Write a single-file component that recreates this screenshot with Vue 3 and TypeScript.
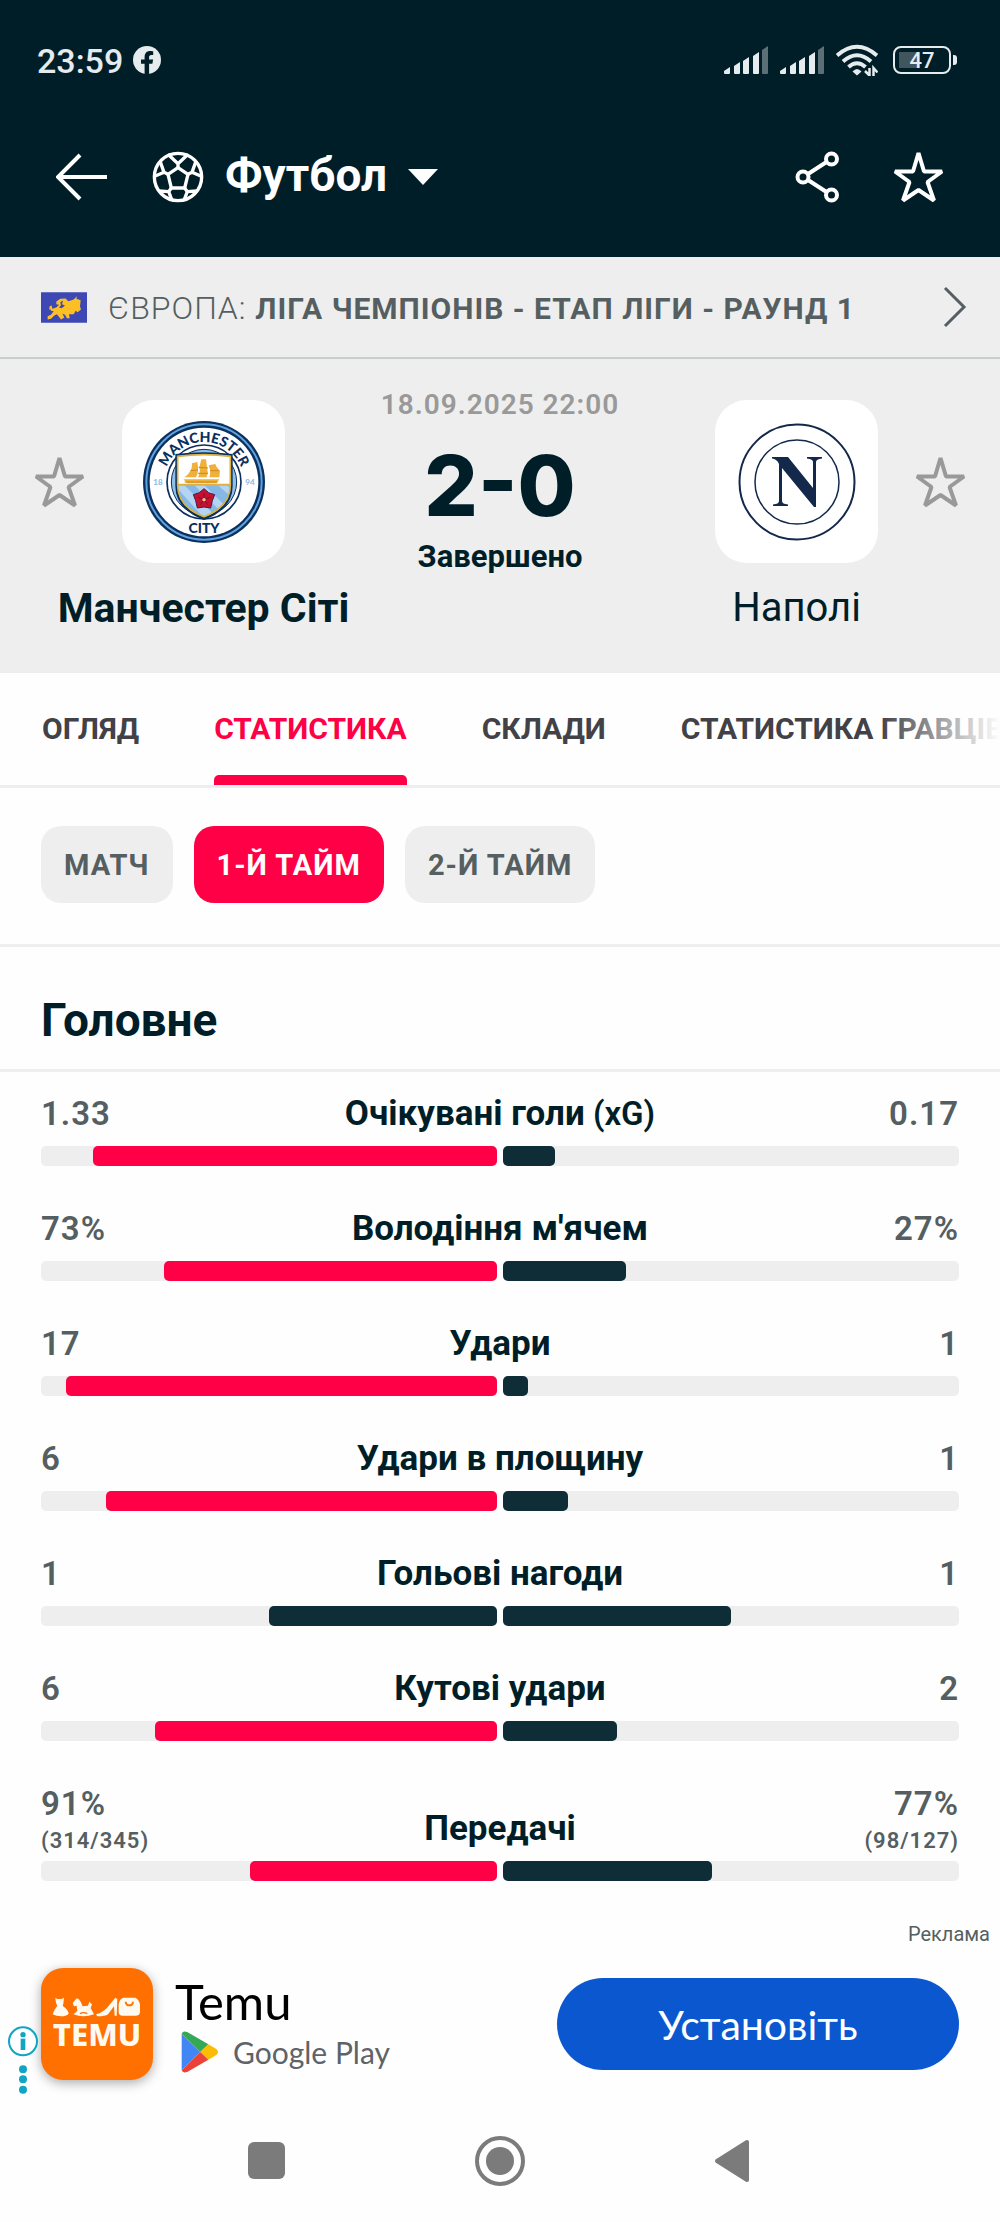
<script setup lang="ts">
import { ref } from 'vue'

interface Side {
  value: string
  detail?: string
  share: number
  leads: boolean
}

interface Stat {
  label: string
  suffix?: string
  home: Side
  away: Side
}

const tabs = ['ОГЛЯД', 'СТАТИСТИКА', 'СКЛАДИ', 'СТАТИСТИКА ГРАВЦІВ']
const activeTab = ref('СТАТИСТИКА')

const periods = ['МАТЧ', '1-Й ТАЙМ', '2-Й ТАЙМ']
const activePeriod = ref('1-Й ТАЙМ')

function stat(label: string, home: number, away: number, unit = '', details: string[] = [], suffix = ''): Stat {
  const total = home + away
  return {
    label,
    suffix,
    home: { value: home + unit, detail: details[0], share: (home / total) * 100, leads: home > away },
    away: { value: away + unit, detail: details[1], share: (away / total) * 100, leads: away > home },
  }
}

const stats: Stat[] = [
  stat('Очікувані голи', 1.33, 0.17, '', [], '(xG)'),
  stat("Володіння м'ячем", 73, 27, '%'),
  stat('Удари', 17, 1),
  stat('Удари в площину', 6, 1),
  stat('Гольові нагоди', 1, 1),
  stat('Кутові удари', 6, 2),
  stat('Передачі', 91, 77, '%', ['(314/345)', '(98/127)']),
]

const signalBars = [
  { x: 0, h: 7 },
  { x: 10, h: 12 },
  { x: 19, h: 17 },
  { x: 29, h: 22 },
  { x: 38, h: 28 },
]
</script>

<template>
  <div class="page">
    <header class="top">
      <div class="status">
        <div class="status-left">
          <span class="clock">23:59</span>
          <svg class="fb" viewBox="0 0 28 28" aria-hidden="true">
            <circle cx="14" cy="14" r="14" fill="#e6ebee" />
            <path d="M11.6 28V17.8H8V13.6h3.600V11c0-3.900 2.200-6 5.600-6 1.500 0 3 .3 3 .3v3.600h-1.800c-1.800 0-2.300 1-2.300 2.200v2.500h4l-.7 4.200H16.100V28z" fill="#001e28" />
          </svg>
        </div>
        <div class="status-right">
          <svg v-for="n in 2" :key="n" class="signal" viewBox="0 0 44 28" aria-hidden="true">
            <path
              v-for="(b, i) in signalBars"
              :key="b.x"
              :d="`M${b.x} ${28 - b.h + 4} L${b.x + 6} ${28 - b.h} V27 Q${b.x + 6} 28 ${b.x + 5} 28 H${b.x + 1} Q${b.x} 28 ${b.x} 27 Z`"
              :fill="i === 4 ? '#5d6f76' : '#e6ebee'"
            />
          </svg>
          <svg class="wifi" viewBox="0 0 42 32" aria-hidden="true">
            <g fill="none" stroke="#e6ebee" stroke-width="4">
              <path d="M1 11.500Q21-6 41 11.500" />
              <path d="M7 17.500Q21 5 35 17.500" />
              <path d="M12.500 23Q21 15.500 29.500 23" />
            </g>
            <path d="M16.500 27.500Q21 22.500 25.500 27.500L21 31.500z" fill="#e6ebee" />
            <path d="M33.500 24v7.500l-4.500-4.500M37.500 32v-8l4 4.500" fill="none" stroke="#e6ebee" stroke-width="2.500" />
          </svg>
          <div class="battery"><span>47</span></div>
        </div>
      </div>

      <div class="appbar">
        <button class="icon-btn" aria-label="Назад">
          <svg width="52" height="48" viewBox="0 0 52 48"><path d="M24 2 2 24l22 22M2 24h49" fill="none" stroke="#fff" stroke-width="4" /></svg>
        </button>
        <button class="sport">
          <svg width="52" height="52" viewBox="-78 -78 156 156" aria-hidden="true">
            <g fill="none" stroke="#fff" stroke-width="10" stroke-linejoin="round">
              <circle r="71" />
              <path d="M0-28 30-8 20 33H-20L-30-8z" />
              <path d="M0-28V-40M-30-68 0-40 30-68M30-8 42-14M54-48 42-14 70-2M20 33 28 44M58 42 28 44 18 70M-20 33-28 44M-18 70-28 44-58 42M-30-8-42-14M-70-2-42-14-54-48" />
            </g>
          </svg>
          <span>Футбол</span>
          <svg class="caret" width="30" height="16" viewBox="0 0 30 16" aria-hidden="true"><path d="M0 0h30L15 16z" fill="#fff" /></svg>
        </button>
        <button class="icon-btn share" aria-label="Поділитися">
          <svg width="44" height="52" viewBox="0 0 44 52">
            <g fill="none" stroke="#fff" stroke-width="4">
              <circle cx="8" cy="26" r="5.500" />
              <circle cx="36.500" cy="8" r="5.500" />
              <circle cx="36.500" cy="44" r="5.500" />
              <path d="M13 23 31.500 11M13 29l18.500 12" />
            </g>
          </svg>
        </button>
        <button class="icon-btn" aria-label="До обраного">
          <svg width="51" height="52" viewBox="0 0 51 52"><path class="star light" d="M25.500 2 31 20.500H49L34.500 31 41 49.500 25.500 39 10 49.500 16.500 31 2 20.500h18z" /></svg>
        </button>
      </div>
    </header>

    <main>
      <a class="league" href="#">
        <svg width="46" height="31" viewBox="0 0 138 92" aria-hidden="true">
          <path d="M0 0h138v92H0z" fill="#3d48b5" />
          <path d="M20 72 30 68 38 57 30 56 27 50 24 54 26 42 32 40 34 50 46 46 54 38 46 36 46 28 58 20 74 19 82 27 98 22 108 12 106 20 119 24 117 42 120 52 110 60 104 56 98 66 84 66 86 78 78 78 72 68 64 64 70 76 60 82 48 66 40 70 30 80 20 82z" fill="#fcbf26" />
          <path d="M54 46 60 39 58 30 66 25 63 36 72 40 62 48z" fill="#3d48b5" />
        </svg>
        <span class="league-name">ЄВРОПА: <b>ЛІГА ЧЕМПІОНІВ - ЕТАП ЛІГИ - РАУНД 1</b></span>
        <svg width="24" height="42" viewBox="0 0 24 42" aria-hidden="true"><path d="M2 2 21 21 2 40" fill="none" stroke="#555e61" stroke-width="3" /></svg>
      </a>

      <section class="match">
        <div class="match-row">
          <button class="icon-btn" aria-label="Стежити за Манчестер Сіті">
            <svg width="51" height="52" viewBox="0 0 51 52"><path class="star" d="M25.500 2 31 20.500H49L34.500 31 41 49.500 25.500 39 10 49.500 16.500 31 2 20.500h18z" /></svg>
          </button>
          <div class="logo">
            <svg width="124" height="124" viewBox="-186 -186 372 372" aria-hidden="true">
              <defs>
                <path id="crest-top" d="M-120 0A120 120 0 0 1 120 0" />
                <clipPath id="shield-clip"><path d="M-80-78Q0-88 80-78V10Q80 76 0 106Q-80 76-80 10z" /></clipPath>
              </defs>
              <circle r="183" fill="#0b2f5f" />
              <circle r="173" fill="none" stroke="#5fa3dc" stroke-width="6" />
              <circle r="163" fill="#fff" />
              <circle r="111" fill="#fff" stroke="#0b2f5f" stroke-width="5" />
              <circle r="98" fill="#8fc0ea" stroke="#0b2f5f" stroke-width="3" />
              <path d="M-86-84Q0-94 86-84V12Q86 82 0 114Q-86 82-86 12z" fill="#0b2f5f" />
              <g clip-path="url(#shield-clip)">
                <path d="M-90-90H90V8H-90z" fill="#fff" />
                <path d="M-90 8H90V120H-90z" fill="#85b8e6" />
                <path d="M-90 8h30L40 108H0zM-30 8H0L90 98v30zM40 8h28l40 40v20z" fill="#b5d4f1" />
                <path d="M-90 5H90v6H-90z" fill="#e0b040" />
              </g>
              <path d="M-79-77Q0-87 79-77V10Q79 74 0 104Q-79 74-79 10z" fill="none" stroke="#d9b23f" stroke-width="5" />
              <g fill="#efb13c">
                <path d="M-62-8H46L38 4H-50zM-8-68H6L10-40Q14-26 8-14H-18Q-10-30-14-44zM-36-56-20-60Q-14-30-24-14H-50Q-36-30-36-56zM14-50 34-54Q36-44 48-34L46-14H16Q22-30 14-50zM-60-14Q-44-24-38-40V-14z" />
              </g>
              <path d="M-16-44 12-42M-40-34-18-36M18-34 44-34M-18-26 12-26M-58 0H40" fill="none" stroke="#c98a1d" stroke-width="3" />
              <path d="M0 20 14 32 32 38 25 56 20 78 0 75-20 78-25 56-32 38-14 32z" fill="#c8102e" stroke="#3a2050" stroke-width="3" />
              <path d="M0 53V34M0 53 18 46M0 53 11 68M0 53-11 68M0 53-18 46" stroke="#74102c" stroke-width="3" />
              <circle cy="53" r="5" fill="#f4c4a0" />
              <text class="crest-text"><textPath href="#crest-top" startOffset="50%">MANCHESTER</textPath></text>
              <text class="crest-text" y="152">CITY</text>
              <text class="crest-year" x="-138" y="9">18</text>
              <text class="crest-year" x="138" y="9">94</text>
            </svg>
          </div>
          <div class="result">
            <time class="date" datetime="2025-09-18T22:00">18.09.2025 22:00</time>
            <div class="score">2-0</div>
            <div class="state">Завершено</div>
          </div>
          <div class="logo">
            <svg width="120" height="120" viewBox="-60 -60 120 120" aria-hidden="true">
              <circle r="57.500" fill="none" stroke="#14284b" stroke-width="2" />
              <circle r="42" fill="none" stroke="#14284b" stroke-width="1.500" />
              <path d="M-25-25H-9L16 6V-20Q16-23 10-23.500V-25H25V-23.500Q19-23 19-20V25H17L-15-14V19Q-15 22-9 22.500V24H-24V22.500Q-18 22-18 19V-18Q-20-23-25-23.500z" fill="#14284b" />
            </svg>
          </div>
          <button class="icon-btn" aria-label="Стежити за Наполі">
            <svg width="51" height="52" viewBox="0 0 51 52"><path class="star" d="M25.500 2 31 20.500H49L34.500 31 41 49.500 25.500 39 10 49.500 16.500 31 2 20.500h18z" /></svg>
          </button>
        </div>
        <div class="names">
          <span class="name winner">Манчестер Сіті</span>
          <span class="name">Наполі</span>
        </div>
      </section>

      <nav class="tabs">
        <button
          v-for="tab in tabs"
          :key="tab"
          class="tab"
          :class="{ active: tab === activeTab }"
          @click="activeTab = tab"
        >{{ tab }}</button>
      </nav>

      <div class="chips">
        <button
          v-for="period in periods"
          :key="period"
          class="chip"
          :class="{ active: period === activePeriod }"
          @click="activePeriod = period"
        >{{ period }}</button>
      </div>

      <h2 class="section-title">Головне</h2>

      <ul class="stats">
        <li v-for="row in stats" :key="row.label" class="stat">
          <div class="stat-head">
            <div class="value">
              {{ row.home.value }}
              <small v-if="row.home.detail">{{ row.home.detail }}</small>
            </div>
            <div class="label">{{ row.label }}<span v-if="row.suffix" class="suffix">&nbsp;{{ row.suffix }}</span></div>
            <div class="value away">
              {{ row.away.value }}
              <small v-if="row.away.detail">{{ row.away.detail }}</small>
            </div>
          </div>
          <div class="bars">
            <div class="bar home"><div class="fill" :class="{ leads: row.home.leads }" :style="{ width: row.home.share + '%' }"></div></div>
            <div class="bar"><div class="fill" :class="{ leads: row.away.leads }" :style="{ width: row.away.share + '%' }"></div></div>
          </div>
        </li>
      </ul>
    </main>

    <aside class="ad-area">
      <div class="ad-label">Реклама</div>
      <div class="ad">
        <div class="temu">
          <svg width="90" height="20" viewBox="0 0 270 60" aria-hidden="true">
            <g fill="#fffaf0">
              <path d="M10 2 16 6H28L36 2 34 20 32 26Q50 40 50 50Q42 58 27 58T2 52Q6 38 16 26L12 18z" />
              <path d="M62 18 74 4 80 6 86 14 92 28 108 26 112 14 120 22 116 34 122 44 126 52Q94 64 64 52L76 42 74 26 66 28z" />
              <path d="M132 52Q150 48 164 34L190 2 196 6 194 56H188L186 28 168 52Q160 58 136 58z" />
              <path d="M214 2H250Q262 8 264 24V44Q264 56 250 56H212Q200 56 200 44V22Q202 6 214 2zM218 14Q220 28 232 28T246 14H240Q240 22 232 22T224 14z" fill-rule="evenodd" />
            </g>
            <path d="M84 50Q94 44 106 50" fill="none" stroke="#ff7000" stroke-width="4" />
          </svg>
          <span>TEMU</span>
        </div>
        <div class="ad-text">
          <div class="ad-name">Temu</div>
          <div class="store">
            <svg width="38" height="42" viewBox="0 0 114 126" aria-hidden="true">
              <path d="M2 8V118L58 63z" fill="#4285f4" />
              <path d="M2 8Q6-2 20 4L82 40 58 63z" fill="#34a853" />
              <path d="M82 40 106 54Q116 63 106 72L82 86 58 63z" fill="#fbbc04" />
              <path d="M2 118Q6 128 20 122L82 86 58 63z" fill="#ea4335" />
            </svg>
            <span>Google Play</span>
          </div>
        </div>
        <button class="install">Установіть</button>
        <div class="ad-choices">
          <svg width="30" height="68" viewBox="0 0 90 204" aria-hidden="true">
            <circle cx="45" cy="46" r="42" fill="#fff" stroke="#10a5c3" stroke-width="6" />
            <circle cx="45" cy="26" r="8" fill="#10a5c3" />
            <path d="M38 38H52V72H38z" fill="#10a5c3" />
            <circle cx="45" cy="130" r="12" fill="#10a5c3" />
            <circle cx="45" cy="160" r="12" fill="#10a5c3" />
            <circle cx="45" cy="191" r="12" fill="#10a5c3" />
          </svg>
        </div>
      </div>
    </aside>

    <footer class="system-nav">
      <button aria-label="Останні програми"><svg width="50" height="50" viewBox="0 0 50 50"><rect x="6" y="6" width="37" height="37" rx="6" fill="#7b7b7b" /></svg></button>
      <button aria-label="Головний екран">
        <svg width="50" height="50" viewBox="0 0 50 50"><circle cx="25" cy="25" r="23" fill="none" stroke="#7b7b7b" stroke-width="4" /><circle cx="25" cy="25" r="14" fill="#7b7b7b" /></svg>
      </button>
      <button aria-label="Назад"><svg width="50" height="50" viewBox="0 0 50 50"><path d="M9 25 39 6V44z" fill="#7b7b7b" stroke="#7b7b7b" stroke-width="4" stroke-linejoin="round" /></svg></button>
    </footer>
  </div>
</template>

<style>
body {
  margin: 0;
  background: #fefefe;
}
</style>

<style scoped>
.page {
  font-family: Roboto, "Noto Sans", sans-serif;
  color: #001e28;
  background: #fefefe;
}

svg {
  display: block;
  flex: none;
}

button {
  margin: 0;
  padding: 0;
  border: 0;
  background: none;
  font: inherit;
  color: inherit;
  white-space: nowrap;
}

.top {
  background: #001e28;
  color: #fff;
}

.status {
  display: flex;
  justify-content: space-between;
  align-items: center;
  height: 72px;
  padding: 24px 43px 0 37px;
  color: #e6ebee;
}

.status-left {
  display: flex;
  align-items: center;
  gap: 10px;
}

.clock {
  padding-top: 2px;
  font-size: 34px;
  line-height: 40px;
  font-weight: 500;
}

.fb {
  width: 28px;
  height: 28px;
}

.status-right {
  display: flex;
  align-items: center;
  gap: 12px;
}

.signal {
  width: 44px;
  height: 28px;
}

.wifi {
  width: 42px;
  height: 32px;
}

.battery {
  position: relative;
  box-sizing: border-box;
  width: 58px;
  height: 28px;
  margin: 0 6px 0 3px;
  border: 2px solid #e6ebee;
  border-radius: 8px;
  background: linear-gradient(#40555d, #40555d) 4px 4px / 20px 16px no-repeat;
  font-size: 22px;
  line-height: 25px;
  font-weight: 500;
  text-align: center;
}

.battery::after {
  content: "";
  position: absolute;
  top: 7px;
  right: -8px;
  width: 4px;
  height: 10px;
  border-radius: 0 3px 3px 0;
  background: #e6ebee;
}

.appbar {
  display: flex;
  align-items: center;
  height: 161px;
  padding: 0 56px;
}

.sport {
  display: flex;
  align-items: center;
  gap: 21px;
  margin: 0 auto 0 44px;
  font-size: 46px;
  line-height: 56px;
  font-weight: 700;
}

.sport span {
  padding-bottom: 4px;
}

.share {
  margin-right: 54px;
}

.star {
  fill: none;
  stroke: #999;
  stroke-width: 4;
  stroke-linejoin: bevel;
}

.star.light {
  stroke: #fff;
}

.league {
  display: flex;
  align-items: center;
  height: 100px;
  padding: 0 33px 0 41px;
  border-bottom: 2px solid #c8cdcd;
  background: #eee;
  color: #555e61;
  text-decoration: none;
}

.league-name {
  flex: 1;
  margin-left: 21px;
  padding-top: 2px;
  font-size: 32px;
  line-height: 40px;
  font-weight: 300;
  letter-spacing: 1px;
  white-space: nowrap;
}

.league-name b {
  font-size: 30px;
  font-weight: 700;
}

.match {
  padding: 28px 0 41px;
  background: #eee;
}

.match-row {
  display: flex;
  align-items: center;
  padding: 0 34px;
}

.logo {
  display: flex;
  align-items: center;
  justify-content: center;
  width: 163px;
  height: 163px;
  margin: 0 37px;
  border-radius: 32px;
  background: #fff;
}

.match-row .result {
  flex: 1;
  display: flex;
  flex-direction: column;
  align-items: center;
  margin: 0 -37px;
  white-space: nowrap;
}

.crest-text {
  font-family: Lato, sans-serif;
  font-size: 42px;
  font-weight: 900;
  fill: #0b2f5f;
  text-anchor: middle;
}

.crest-year {
  font-family: Lato, sans-serif;
  font-size: 24px;
  font-weight: 700;
  fill: #85b8e6;
  text-anchor: middle;
}

.date {
  font-size: 28px;
  line-height: 36px;
  font-weight: 600;
  letter-spacing: 1px;
  color: #999;
}

.score {
  margin: 15px 0 5px;
  font-family: Inter, sans-serif;
  font-size: 84px;
  line-height: 95px;
  font-weight: 800;
  font-feature-settings: "case";
}

.state {
  font-size: 31px;
  line-height: 38px;
  font-weight: 700;
}

.names {
  display: grid;
  grid-template-columns: 1fr 1fr;
  column-gap: 186px;
  margin-top: 8px;
}

.name {
  font-size: 40px;
  line-height: 48px;
  text-align: center;
  white-space: nowrap;
}

.winner {
  font-size: 41px;
  font-weight: 700;
}

.tabs {
  position: relative;
  display: flex;
  gap: 75px;
  height: 112px;
  padding-left: 42px;
  overflow: hidden;
  border-bottom: 3px solid #eee;
}

.tabs::after {
  content: "";
  position: absolute;
  top: 0;
  right: 0;
  bottom: 0;
  width: 120px;
  background: linear-gradient(to right, #fefefe00, #fefefe);
}

.tab {
  position: relative;
  font-size: 30px;
  line-height: 40px;
  font-weight: 700;
  color: #424147;
}

.tab.active {
  color: #ff0046;
}

.tab.active::after {
  content: "";
  position: absolute;
  left: 0;
  right: 0;
  bottom: 0;
  height: 10px;
  border-radius: 5px 5px 0 0;
  background: #ff0046;
}

.chips {
  display: flex;
  gap: 21px;
  padding: 38px 41px 41px;
  border-bottom: 3px solid #eee;
}

.chip {
  height: 77px;
  padding: 0 23px;
  border-radius: 20px;
  background: #eee;
  color: #555e61;
  font-size: 29px;
  line-height: 40px;
  font-weight: 700;
  letter-spacing: 1px;
}

.chip.active {
  background: #ff0046;
  color: #fff;
}

.section-title {
  margin: 0;
  padding: 45px 41px 21px;
  border-bottom: 3px solid #eee;
  font-size: 46px;
  line-height: 56px;
  font-weight: 700;
}

.stats {
  margin: 0;
  padding: 22px 41px 0;
  list-style: none;
}

.stat + .stat {
  margin-top: 43px;
}

.stat-head {
  display: grid;
  grid-template-columns: 1fr auto 1fr;
  margin-bottom: 4px;
}

.value {
  font-size: 33px;
  line-height: 40px;
  font-weight: 600;
  letter-spacing: 1px;
  color: #555e61;
}

.value small {
  display: block;
  font-size: 22px;
  line-height: 33px;
}

.value.away {
  text-align: right;
}

.label {
  align-self: end;
  margin-bottom: 8px;
  font-size: 35px;
  line-height: 40px;
  font-weight: 700;
}

.suffix {
  font-size: 33px;
  font-weight: 600;
}

.bars {
  display: grid;
  grid-template-columns: 1fr 1fr;
  gap: 6px;
}

.bar {
  display: flex;
  height: 20px;
  border-radius: 5px;
  background: #eee;
}

.bar.home {
  justify-content: flex-end;
}

.fill {
  border-radius: 5px;
  background: #0f2d37;
}

.fill.leads {
  background: #ff0046;
}

.ad-label {
  margin-top: 40px;
  padding-right: 10px;
  font-size: 20px;
  line-height: 26px;
  color: #555e61;
  text-align: right;
}

.ad {
  position: relative;
  display: flex;
  align-items: center;
  padding: 21px 41px 20px;
}

.temu {
  display: flex;
  flex-direction: column;
  align-items: center;
  justify-content: center;
  width: 112px;
  height: 112px;
  border-radius: 22px;
  background: #ff7000;
  box-shadow: 0 3px 12px #0005;
  color: #fffaf0;
  font-family: "Noto Sans", sans-serif;
  font-size: 31px;
  line-height: 34px;
  font-weight: 800;
}

.ad-text {
  flex: 1;
  margin-left: 22px;
}

.ad-name {
  font-family: Lato, sans-serif;
  font-size: 49px;
  line-height: 56px;
  color: #000;
}

.store {
  display: flex;
  align-items: center;
  gap: 14px;
  padding-left: 6px;
  font-family: Lato, sans-serif;
  font-size: 30px;
  line-height: 46px;
  color: #5f6368;
}

.install {
  width: 402px;
  height: 92px;
  border-radius: 46px;
  background: #0b57d0;
  color: #fff;
  font-family: Lato, sans-serif;
  font-size: 41px;
}

.ad-choices {
  position: absolute;
  left: 0;
  bottom: 2px;
  padding: 4px 4px 4px 8px;
}

.system-nav {
  display: flex;
  align-items: center;
  justify-content: center;
  gap: 183px;
  height: 122px;
}
</style>
